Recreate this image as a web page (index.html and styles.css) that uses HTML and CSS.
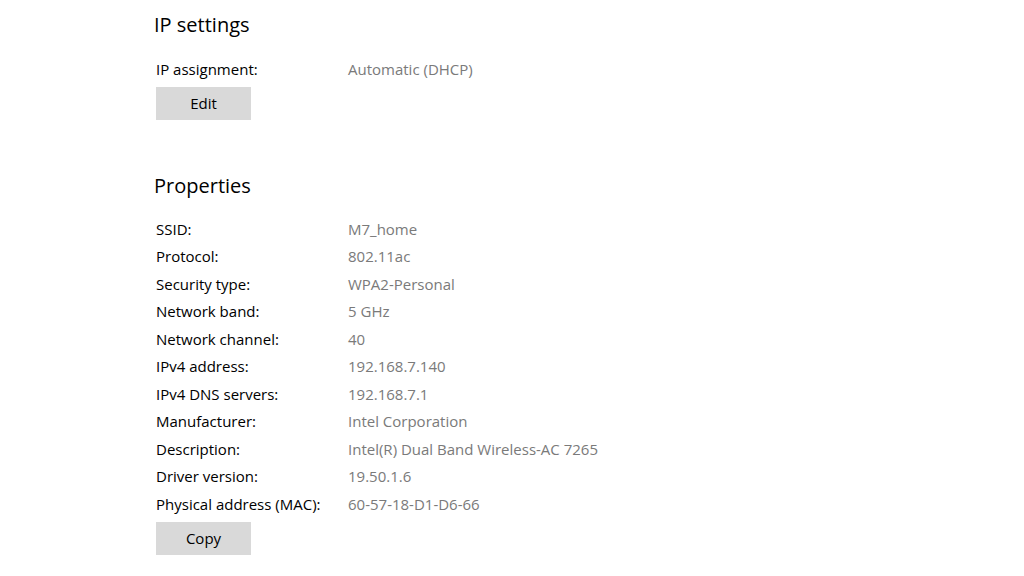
FILE: index.html
```html
<!DOCTYPE html>
<html lang="en">

<head>
    <meta charset="UTF-8">
    <title>Network properties</title>
    <link rel="stylesheet" href="styles.css">
</head>

<body>
    <div class="page">
        <section class="group">
            <h2 class="title">IP settings</h2>
            <div class="props">
                <span class="label">IP assignment:</span>
                <span class="value">Automatic (DHCP)</span>
            </div>
            <button class="btn">Edit</button>
        </section>

        <section class="group props-group">
            <h2 class="title">Properties</h2>
            <div class="props">
                <span class="label">SSID:</span>
                <span class="value">M7_home</span>
                <span class="label">Protocol:</span>
                <span class="value">802.11ac</span>
                <span class="label">Security type:</span>
                <span class="value">WPA2-Personal</span>
                <span class="label">Network band:</span>
                <span class="value">5 GHz</span>
                <span class="label">Network channel:</span>
                <span class="value">40</span>
                <span class="label">IPv4 address:</span>
                <span class="value">192.168.7.140</span>
                <span class="label">IPv4 DNS servers:</span>
                <span class="value">192.168.7.1</span>
                <span class="label">Manufacturer:</span>
                <span class="value">Intel Corporation</span>
                <span class="label">Description:</span>
                <span class="value">Intel(R) Dual Band Wireless-AC 7265</span>
                <span class="label">Driver version:</span>
                <span class="value">19.50.1.6</span>
                <span class="label">Physical address (MAC):</span>
                <span class="value">60-57-18-D1-D6-66</span>
            </div>
            <button class="btn">Copy</button>
        </section>
    </div>
</body>

</html>
```

FILE: styles.css
```css
body {
    margin: 0;
    background: #ffffff;
    font-family: 'Open Sans', 'Noto Sans', sans-serif;
    color: #000000;
}

.page {
    padding: 11px 0 0 154px;
}

.title {
    margin: 0 0 17px 0;
    font-size: 20px;
    font-weight: 400;
    line-height: 28px;
    color: #000000;
}

.props-group {
    margin-top: 52px;
}

.props-group .title {
    margin-bottom: 16px;
}

.props {
    display: grid;
    grid-template-columns: 192px auto;
    grid-auto-rows: 27.5px;
    align-items: center;
    padding-left: 2px;
    font-size: 15px;
}

.props span {
    padding-bottom: 2px;
}

.label {
    color: #000000;
}

.value {
    color: #7a7a7a;
}

.btn {
    display: block;
    margin: 3.5px 0 0 2px;
    width: 95px;
    height: 33px;
    border: none;
    padding: 0 0 2px 0;
    background: #d9d9d9;
    font-family: inherit;
    font-size: 15px;
    color: #000000;
}
```
